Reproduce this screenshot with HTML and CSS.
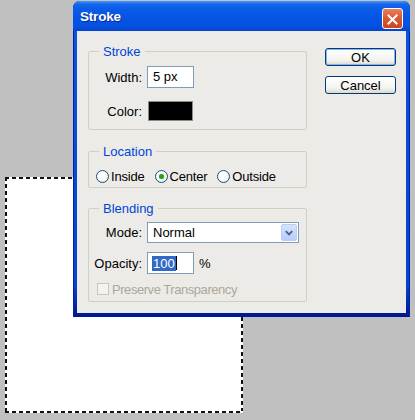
FILE: index.html
```html
<!DOCTYPE html>
<html lang="en">
<head>
<meta charset="utf-8">
<title>Stroke</title>
<link rel="stylesheet" href="styles.css">
</head>
<body>
<div class="desk">
    <div class="selection"></div>

    <div class="dialog">
        <div class="titlebar">
            <span class="title">Stroke</span>
            <span class="close">
                <svg width="21" height="21" viewBox="0 0 21 21"><path d="M6 6L15 15M15 6L6 15" stroke="#fff" stroke-width="2.2" stroke-linecap="square"/></svg>
            </span>
        </div>
        <div class="body">
            <div class="groups">
                <fieldset class="group g-stroke">
                    <legend>Stroke</legend>
                    <div class="row">
                        <span class="lbl">Width:</span>
                        <span class="field f-width">5 px</span>
                    </div>
                    <div class="row r-color">
                        <span class="lbl">Color:</span>
                        <span class="swatch"></span>
                    </div>
                </fieldset>

                <fieldset class="group g-location">
                    <legend>Location</legend>
                    <div class="radios">
                        <span class="radio"><i class="circle"></i>Inside</span>
                        <span class="radio"><i class="circle on"></i>Center</span>
                        <span class="radio"><i class="circle"></i>Outside</span>
                    </div>
                </fieldset>

                <fieldset class="group g-blend">
                    <legend>Blending</legend>
                    <div class="row r-mode">
                        <span class="lbl">Mode:</span>
                        <span class="select">Normal
                            <span class="arrow"><svg width="15" height="17" viewBox="0 0 15 17"><path d="M4 7l3.5 3.5L11 7" fill="none" stroke="#4d6185" stroke-width="2"/></svg></span>
                        </span>
                    </div>
                    <div class="row r-opacity">
                        <span class="lbl">Opacity:</span>
                        <span class="field f-opacity"><span class="hilite">100</span><i class="caret"></i></span>
                        <span class="pct">%</span>
                    </div>
                    <div class="check"><i class="box"></i>Preserve Transparency</div>
                </fieldset>
            </div>

            <div class="buttons">
                <button class="btn default">OK</button>
                <button class="btn">Cancel</button>
            </div>
        </div>
    </div>
</div>
</body>
</html>
```
FILE: styles.css
```css
*{margin:0;padding:0;box-sizing:border-box;}
body{background:#c0c0c0;font:13px "Liberation Sans",Arial,sans-serif;color:#000;}
.desk{position:relative;width:415px;height:420px;overflow:hidden;}

/* marching ants */
.selection{position:absolute;left:5px;top:177px;width:238px;height:236px;
    background:
        repeating-linear-gradient(90deg,#111 0 4px,#fff 4px 7px) left top/100% 2px no-repeat,
        repeating-linear-gradient(90deg,#111 0 4px,#fff 4px 7px) left bottom/100% 2px no-repeat,
        repeating-linear-gradient(180deg,#111 0 4px,#fff 4px 7px) left top/2px 100% no-repeat,
        repeating-linear-gradient(180deg,#111 0 4px,#fff 4px 7px) right top/2px 100% no-repeat,
        #fff;}

/* window */
.dialog{position:absolute;left:73px;top:1px;width:337px;height:316px;display:flex;flex-direction:column;
    background:linear-gradient(180deg,#0a55e0,#0642cf 90%,#00168f);border-radius:7px 7px 0 0;
    box-shadow:inset 1px 0 #0020a8,inset -1px 0 #0020a8;padding:0 4px 4px;}
.titlebar{height:30px;margin:0 -4px;padding:0 7px;display:flex;align-items:center;justify-content:space-between;
    border-radius:7px 7px 0 0;
    background:linear-gradient(180deg,#4b98fb 0,#1467ec 3px,#0a5ce8 8px,#0656e6 50%,#0550e0 85%,#0443cc 100%);}
.title{color:#fff;font-weight:bold;font-size:13.5px;letter-spacing:-0.2px;text-shadow:1px 1px #0b2a8c;margin-top:1px;}
.close{width:21px;height:21px;margin-top:4px;border:1px solid #fff;border-radius:3px;display:flex;
    background:linear-gradient(180deg,#e8805f,#dc5a32 45%,#cc4320);}

.body{flex:1;background:#ecebe8;display:flex;padding:13px 0 0 11px;}
.groups{width:219px;}

.group{border:1px solid #cfcfc2;border-radius:2px;min-width:0;}
.group legend{color:#0046d5;line-height:15px;padding:0 4px;margin-left:10px;}
.g-stroke{padding:7px 0 8px;}
.g-location{margin-top:14px;padding:8px 0 2px;}
.g-blend{margin-top:13px;padding:6px 0 5px;}

.row{display:flex;align-items:center;height:22px;}
.r-color{margin-top:13px;height:20px;}
.r-mode{height:21px;}
.r-opacity{margin-top:9px;}
.lbl{width:53px;text-align:right;margin-right:5px;}

.field{height:22px;width:47px;background:#fff;border:1px solid #7f9db9;padding-left:5px;line-height:20px;display:flex;align-items:center;}
.swatch{width:45px;height:20px;background:#000;border:1px solid #8a8a8a;margin-left:1px;}

.select{position:relative;width:152px;height:21px;background:#fff;border:1px solid #7f9db9;padding-left:5px;
    display:flex;align-items:center;justify-content:space-between;}
.arrow{width:16px;height:17px;margin-right:1px;border:1px solid #bcccf3;border-radius:2px;display:flex;align-items:center;justify-content:center;
    background:linear-gradient(180deg,#d7e3fd,#b9cdfa);}

.hilite{background:#316ac5;color:#fff;line-height:15px;padding:0 1px;margin-left:-1px;}
.caret{display:inline-block;width:1px;height:14px;background:#000;}
.pct{margin-left:5px;}

.radios{display:flex;align-items:center;height:18px;padding-left:7px;gap:10px;letter-spacing:-0.2px;}
.radio{display:flex;align-items:center;gap:2px;}
.circle{width:13px;height:13px;border-radius:50%;border:1px solid #1c5180;display:flex;align-items:center;justify-content:center;
    background:radial-gradient(circle at 40% 40%,#fff 30%,#e2e0d6 100%);}
.circle.on::after{content:"";width:5px;height:5px;border-radius:50%;background:#21a121;box-shadow:0 0 1px #6cd46c;}

.check{display:flex;align-items:center;height:14px;margin-top:8px;padding-left:8px;color:#aca899;letter-spacing:-0.45px;}
.box{width:12px;height:12px;border:1px solid #cac8bb;background:#f4f3ee;margin-right:3px;}

.buttons{display:flex;flex-direction:column;margin-left:18px;}
.btn{font:inherit;width:71px;height:18px;line-height:15px;border:1px solid #003c74;border-radius:3px;color:#000;
    background:linear-gradient(180deg,#fff,#f3f3ef 70%,#dcd8cc);}
.btn.default{margin-top:4px;box-shadow:inset 0 0 0 1px #8db2f3;}
.btn + .btn{margin-top:10px;}
```
